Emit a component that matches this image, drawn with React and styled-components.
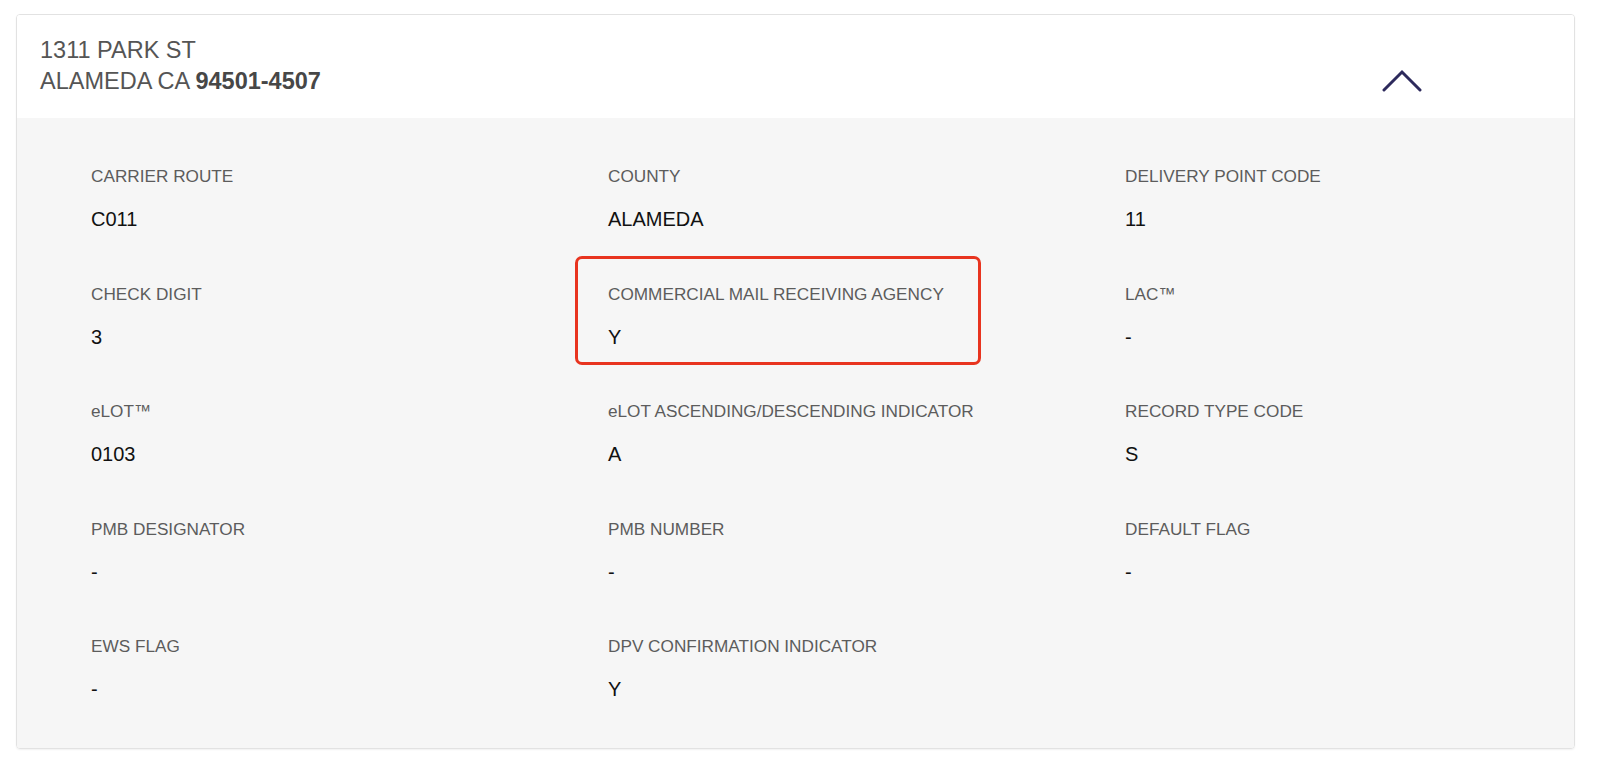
import React from "react";
import styled, { createGlobalStyle } from "styled-components";

const GlobalStyle = createGlobalStyle`
  body {
    margin: 0;
    background: #ffffff;
    font-family: "Liberation Sans", Arial, Helvetica, sans-serif;
  }
`;

const Page = styled.div`
  padding: 14px 25px 16px 16px;
`;

const Card = styled.section`
  border: 1px solid #e2e2e2;
  border-radius: 4px;
  overflow: hidden;
  box-shadow: 0 1px 2px rgba(0, 0, 0, 0.06);
`;

const Header = styled.header`
  display: flex;
  align-items: center;
  justify-content: space-between;
  height: 103px;
  padding: 0 152px 0 23px;
  background: #ffffff;
`;

const Address = styled.div`
  font-size: 23.5px;
  line-height: 31px;
  color: #555555;
  margin-top: -2px;
`;

const Zip = styled.strong`
  font-weight: 700;
  color: #474747;
`;

const Toggle = styled.button`
  border: 0;
  background: none;
  padding: 0;
  margin-top: 28px;
  cursor: pointer;
  display: flex;
`;

const Body = styled.div`
  display: grid;
  grid-template-columns: 517px 517px 1fr;
  row-gap: 52.5px;
  padding: 48px 0 47px 74px;
  background: #f6f6f6;
`;

const Field = styled.div`
  position: relative;
  display: flex;
  flex-direction: column;
  gap: 21px;
  ${({ $highlight }) =>
    $highlight &&
    `
    &::after {
      content: "";
      position: absolute;
      left: -33px;
      top: -28px;
      width: 406px;
      height: 109px;
      box-sizing: border-box;
      border: 3px solid #e8341f;
      border-radius: 7px;
      pointer-events: none;
    }
  `}
`;

const Label = styled.div`
  font-size: 17.2px;
  line-height: 20px;
  color: #5c5c5c;
`;

const Value = styled.div`
  font-size: 20px;
  line-height: 24px;
  color: #111111;
`;

const fields = [
  ["CARRIER ROUTE", "C011"],
  ["COUNTY", "ALAMEDA"],
  ["DELIVERY POINT CODE", "11"],
  ["CHECK DIGIT", "3"],
  ["COMMERCIAL MAIL RECEIVING AGENCY", "Y", true],
  ["LAC™", "-"],
  ["eLOT™", "0103"],
  ["eLOT ASCENDING/DESCENDING INDICATOR", "A"],
  ["RECORD TYPE CODE", "S"],
  ["PMB DESIGNATOR", "-"],
  ["PMB NUMBER", "-"],
  ["DEFAULT FLAG", "-"],
  ["EWS FLAG", "-"],
  ["DPV CONFIRMATION INDICATOR", "Y"],
];

const ChevronUp = () => (
  <svg width="40" height="24" viewBox="0 0 40 24" fill="none">
    <path
      d="M2 21 L20 3 L38 21"
      stroke="#2d2a5c"
      strokeWidth="3"
      strokeLinecap="round"
      strokeLinejoin="miter"
    />
  </svg>
);

const App = () => (
  <>
    <GlobalStyle />
    <Page>
      <Card>
        <Header>
          <Address>
            <div>1311 PARK ST</div>
            <div>
              ALAMEDA CA <Zip>94501-4507</Zip>
            </div>
          </Address>
          <Toggle aria-label="Collapse">
            <ChevronUp />
          </Toggle>
        </Header>
        <Body>
          {fields.map(([label, value, highlight]) => (
            <Field key={label} $highlight={highlight}>
              <Label>{label}</Label>
              <Value>{value}</Value>
            </Field>
          ))}
        </Body>
      </Card>
    </Page>
  </>
);

export default App;
